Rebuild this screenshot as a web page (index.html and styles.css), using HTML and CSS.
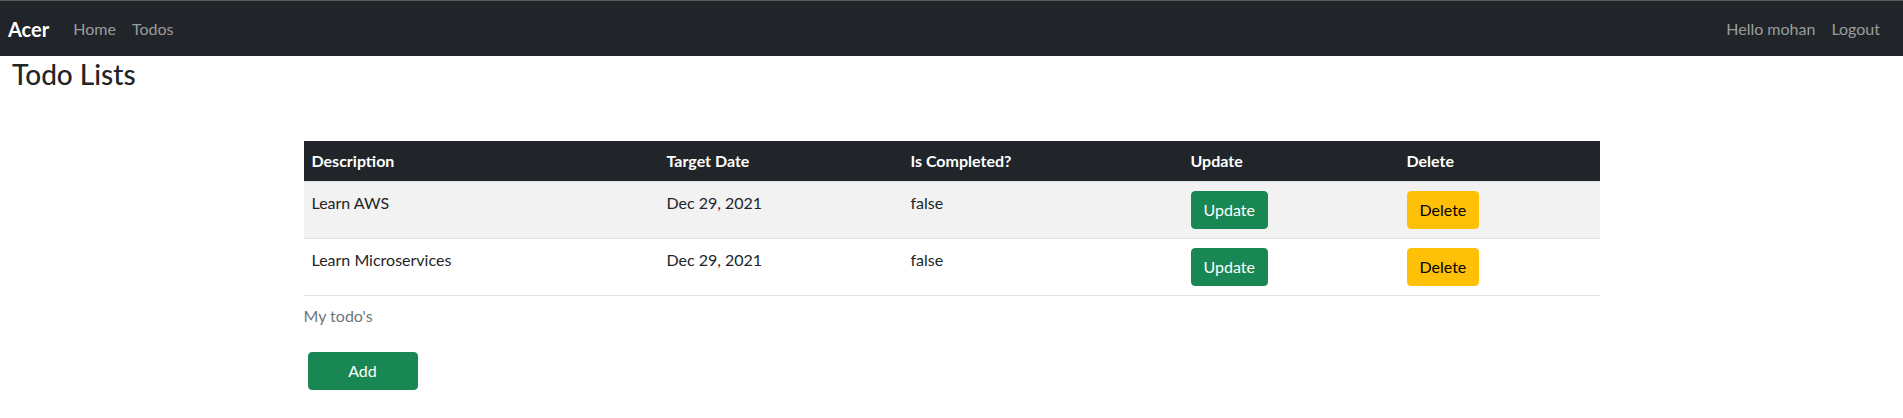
FILE: index.html
```html
<!DOCTYPE html>
<html lang="en">
<head>
<meta charset="utf-8">
<title>Todo Lists</title>
<link rel="stylesheet" href="styles.css">
</head>
<body>
<nav class="navbar">
  <div class="nav-left">
    <a class="brand" href="#">Acer</a>
    <a class="nav-link" href="#">Home</a>
    <a class="nav-link" href="#">Todos</a>
  </div>
  <div class="nav-right">
    <a class="nav-link" href="#">Hello mohan</a>
    <a class="nav-link" href="#">Logout</a>
  </div>
</nav>
<h2 class="page-title">Todo Lists</h2>
<div class="container">
  <table class="table">
    <caption>My todo's</caption>
    <thead>
      <tr>
        <th class="c-desc">Description</th>
        <th class="c-date">Target Date</th>
        <th class="c-done">Is Completed?</th>
        <th class="c-upd">Update</th>
        <th class="c-del">Delete</th>
      </tr>
    </thead>
    <tbody>
      <tr class="striped">
        <td>Learn AWS</td>
        <td>Dec 29, 2021</td>
        <td>false</td>
        <td><button class="btn btn-success">Update</button></td>
        <td><button class="btn btn-warning">Delete</button></td>
      </tr>
      <tr>
        <td>Learn Microservices</td>
        <td>Dec 29, 2021</td>
        <td>false</td>
        <td><button class="btn btn-success">Update</button></td>
        <td><button class="btn btn-warning">Delete</button></td>
      </tr>
    </tbody>
  </table>
  <button class="btn btn-success btn-add">Add</button>
</div>
</body>
</html>
```
FILE: styles.css
```css
* { box-sizing: border-box; }
body {
  margin: 0;
  font-family: "Segoe UI", Lato, "Noto Sans", "Liberation Sans", sans-serif;
  font-size: 16px;
  line-height: 1.5;
  color: #212529;
  background: #fff;
}
a { text-decoration: none; }
.navbar {
  display: flex;
  justify-content: space-between;
  align-items: center;
  background: #212529;
  border-top: 1px solid #5a5d60;
  height: 56px;
  padding: 0 15px 0 8px;
}
.nav-left, .nav-right { display: flex; align-items: center; }
.brand {
  color: #fff;
  font-size: 20px;
  font-weight: 700;
  line-height: 30px;
  margin-right: 16px;
}
.nav-link {
  color: rgba(255,255,255,.55);
  padding: 8px;
  line-height: 24px;
}
.page-title {
  margin: 0 0 0 12px;
  font-size: 28px;
  font-weight: 500;
  line-height: 1.2;
  padding-top: 2px;
}
.container {
  width: 1296px;
  margin: 49px auto 0;
}
.table {
  width: 100%;
  border-collapse: collapse;
  caption-side: bottom;
  margin-bottom: 16px;
}
.table caption {
  text-align: left;
  color: #6c757d;
  padding: 8px 0;
}
.table th, .table td {
  text-align: left;
  vertical-align: top;
  padding: 8px;
  border-bottom: 1px solid #dee2e6;
}
.table tbody td { padding: 9px 8px 9px; }
.table thead th {
  background: #212529;
  color: #fff;
  font-weight: 700;
  border-bottom: 1px solid #dee2e6;
}
.table tr.striped td { background: #f2f2f2; }
.c-desc { width: 355px; }
.c-date { width: 244px; }
.c-done { width: 280px; }
.c-upd { width: 216px; }
.c-del { width: 201px; }
.btn {
  display: inline-block;
  vertical-align: top;
  font-family: inherit;
  font-size: 16px;
  line-height: 24px;
  padding: 6px 12px;
  border: 1px solid transparent;
  border-radius: 4px;
  cursor: pointer;
}
.btn-success { background: #198754; border-color: #198754; color: #fff; }
.btn-warning { background: #ffc107; border-color: #ffc107; color: #000; }
.btn-add { width: 110px; margin-left: 4px; }
```
